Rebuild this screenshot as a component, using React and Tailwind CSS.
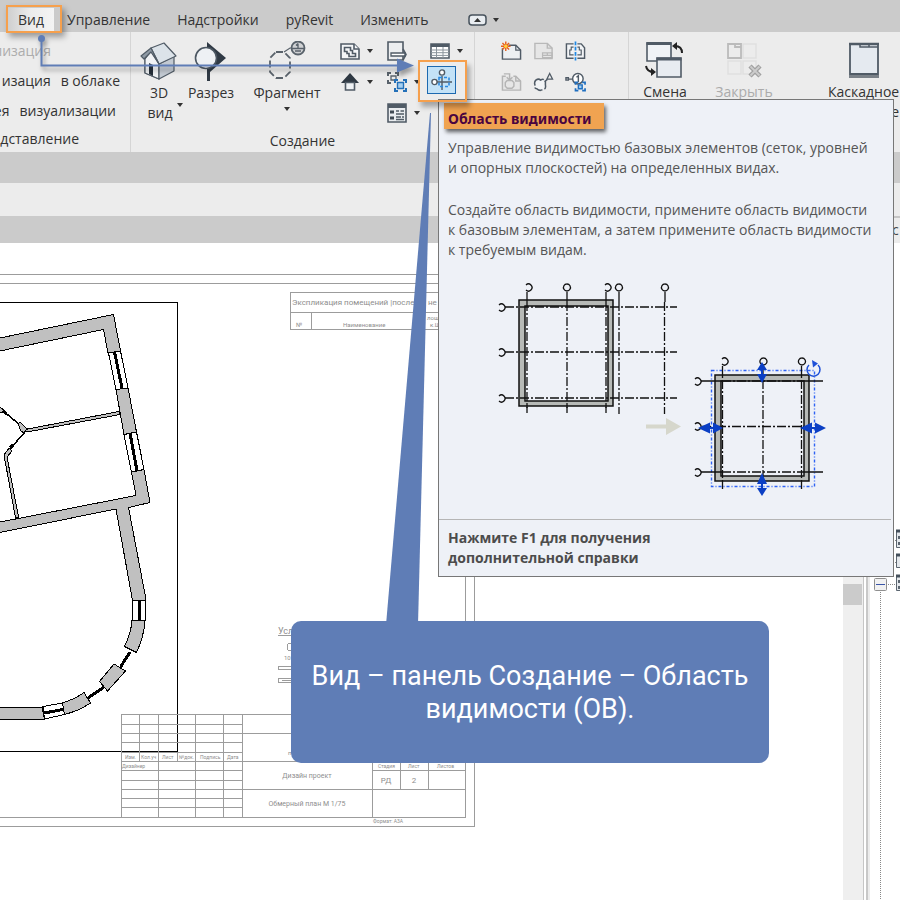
import React from "react";

const ICON = "#505b66";

const tabs = ["Управление", "Надстройки", "pyRevit", "Изменить"];

const Caret = ({ className = "" }) => (
  <svg className={`h-1 w-[6px] shrink-0 ${className}`} viewBox="0 0 6 4">
    <path d="M0 0h6L3 4z" fill="#333" />
  </svg>
);

const HouseIcon = () => (
  <svg width="38" height="38" viewBox="0 0 38 38" stroke={ICON} strokeWidth="1.2" strokeLinejoin="round">
    <path d="M5 17v14l14 6V21z" fill="#f5f7f9" />
    <path d="M5 17l6-8 8 13v15L5 31z" fill="#f1f3f5" />
    <path d="M19 22l15-8v15l-15 8z" fill="#c3cad2" />
    <path d="M11 6L24 1l12 13-17 8z" fill="#dce3e9" />
    <path d="M11 6L1 14l3 3 7-7 8 12z" fill="#8f9aa5" />
    <path d="M9 21l4 2v11l-4-2z" fill="#26303a" stroke="none" />
  </svg>
);

const SectionIcon = () => (
  <svg width="36" height="40" viewBox="0 0 36 40">
    <path d="M14 1l19 16-16 14v9h-3z" fill="#303a45" />
    <circle cx="13" cy="17" r="10.500" fill="#eef1f4" stroke="#4c5762" strokeWidth="1.6" />
  </svg>
);

const CalloutIcon = () => (
  <svg width="38" height="40" viewBox="0 0 38 40" fill="none" stroke="#59626b" strokeWidth="1.8">
    <path d="M8 11h8l6 6v14l-6 6H8l-6-6V17z" strokeDasharray="7 3" />
    <path d="M16 11l6-4h4" strokeWidth="1.2" />
    <circle cx="30" cy="7" r="6.5" fill="#d0d2d4" />
    <path d="M23.500 7.500h13M30 2.500v5M28 4.500l2-2M27 10h6" strokeWidth="1.3" />
  </svg>
);

const PlanIcon = () => (
  <svg width="20" height="18" viewBox="0 0 20 18" fill="#f4f6f8" stroke={ICON} strokeWidth="1.600">
    <path d="M1 2h13l5 5v10H1z" />
    <path d="M14 2v5h5" />
    <path d="M4.500 5.500h6v3h2v3h3v3H9v-3H7v-2H4.500z" />
  </svg>
);

const ElevationIcon = () => (
  <svg width="20" height="18" viewBox="0 0 20 18">
    <path d="M10 0l9 10H1z" fill="#2f3943" />
    <path d="M5.500 9.500h9V17h-9z" fill="#f0f3f6" stroke={ICON} strokeWidth="1.600" />
  </svg>
);

const DraftIcon = () => (
  <svg width="20" height="20" viewBox="0 0 20 20" fill="none" stroke={ICON} strokeWidth="1.600">
    <path d="M1 1h15v18H1z" fill="#eceef0" />
    <path d="M4 12h14v3H4z" fill="#fff" strokeWidth="1.300" />
    <path d="M16 8l3 5.500-3 5.500" />
  </svg>
);

const DuplicateIcon = () => (
  <svg width="20" height="20" viewBox="0 0 20 20" fill="none" strokeWidth="2">
    <path d="M1 4V1h3M8 1h3v3M1 8v3h3" stroke="#59626b" />
    <path d="M4 4h5v4H4z" stroke="#59626b" strokeWidth="1.300" />
    <path d="M8 11V8h3M16 8h3v3M8 16v3h3M16 19h3v-3" stroke="#2470b8" />
    <path d="M10.500 10.500h6v6h-6z" fill="#a8d0f0" stroke="#2470b8" strokeWidth="1.400" />
  </svg>
);

const LegendIcon = () => (
  <svg width="20" height="20" viewBox="0 0 20 20">
    <path d="M1 1h18v18H1z" fill="#e9ecef" stroke={ICON} strokeWidth="1.600" />
    <path d="M1 1h18v4H1z" fill={ICON} />
    <path d="M3 7.500h4v3H3zM3 13.500h4v3H3z" fill="#3f4953" />
    <path d="M9 8h3M13.500 8H17M9 11h8M9 14h5M15 14h2M9 16.500h8" stroke={ICON} strokeWidth="1.300" />
  </svg>
);

const ScheduleIcon = () => (
  <svg width="20" height="16" viewBox="0 0 20 16">
    <path d="M1 1h18v14H1z" fill="#fff" stroke={ICON} strokeWidth="1.600" />
    <path d="M1 1h18v3H1z" fill={ICON} />
    <path d="M1 7h18M1 9.700h18M1 12.400h18M6.500 4v11M13 4v11" stroke="#8b949c" strokeWidth="1" />
  </svg>
);

const ScopeBoxIcon = () => (
  <svg width="22" height="22" viewBox="0 0 22 22" fill="none" stroke={ICON} strokeWidth="1.400">
    <path d="M11 7v14M6 13h15" />
    <circle cx="11" cy="3.500" r="2.600" fill="#fff" />
    <circle cx="3.500" cy="13" r="2.600" fill="#fff" />
    <path d="M8 8.500h10v9H8z" stroke="#2b8ae0" strokeDasharray="3 2" strokeWidth="1.600" />
  </svg>
);

const SheetIcon = () => (
  <svg width="22" height="20" viewBox="0 0 22 20">
    <path d="M1.500 7v11.500h19V9l-5-5H8" fill="#eceff2" stroke={ICON} strokeWidth="1.500" />
    <path d="M15.500 4v5h5" fill="none" stroke={ICON} strokeWidth="1.300" />
    <path d="M5 0v10M0 5h10M1.500 1.500l7 7M8.500 1.500l-7 7" stroke="#e8601c" strokeWidth="1.500" />
    <circle cx="5" cy="5" r="1.800" fill="#ffd23c" />
  </svg>
);

const TitleBlockIcon = () => (
  <svg width="22" height="20" viewBox="0 0 22 20" fill="none" stroke="#b9b9b9" strokeWidth="1.500">
    <path d="M2 2h13l5 5v11H2z" fill="#e6e6e6" />
    <path d="M15 2v5h5" />
    <path d="M10 12h10v5H10zM10 14.500h10M15 12v2.500" strokeWidth="1.300" />
  </svg>
);

const MatchlineIcon = () => (
  <svg width="22" height="20" viewBox="0 0 22 20" fill="none" stroke={ICON} strokeWidth="1.500">
    <path d="M9 2.500H1.500v15H9M13 2.500h4l3.500 4v11H13" fill="#f2f4f6" />
    <path d="M9 6H6.500v3H5v5h4M13 6h2v3h2v5h-4" strokeWidth="1.200" />
    <path d="M11 0v20" stroke="#1e88e5" strokeWidth="1.800" strokeDasharray="4 1.500" />
  </svg>
);

const PlaceViewIcon = () => (
  <svg width="22" height="20" viewBox="0 0 22 20" fill="none" stroke="#b5b5b5" strokeWidth="1.500">
    <path d="M5 4H1.500v14.500h19V9l-5-5H13" fill="#e6e6e6" />
    <path d="M15.500 4v5h5M3 1.500h6V7M6 5l3 3 3-3" />
    <path d="M6.500 8.500h5l2 2v4l-2 2h-5l-2-2v-4z" />
  </svg>
);

const RevisionIcon = () => (
  <svg width="22" height="20" viewBox="0 0 22 20" fill="none" stroke={ICON} strokeWidth="1.600">
    <path d="M3 8q3-2 5 0 3-2 5 1v4q1 5-3 5-3 2-6-1-3 0-2-4-1-3 1-5z" fill="#f2f4f6" strokeDasharray="9 2" />
    <path d="M17.500 1l3 6h-6zM15 7.500l-3 2" strokeWidth="1.300" />
  </svg>
);

const GuideGridIcon = () => (
  <svg width="22" height="20" viewBox="0 0 22 20" fill="none" stroke={ICON} strokeWidth="1.500">
    <path d="M1 5.500h2.500v2.500H1zM3 7h5" />
    <circle cx="13.500" cy="6.500" r="5.500" fill="#fff" />
    <path d="M12 5l2-1.500V10" />
    <path d="M11 13v-2.500h3M18 10.500h3V13M11 16.500V19h3M18 19h3v-2.500" stroke="#1f6fc0" strokeWidth="1.800" />
    <path d="M14 13h4v4h-4z" fill="#9fd0f5" stroke="#1f6fc0" />
  </svg>
);

const SwitchWindowIcon = () => (
  <svg width="40" height="38" viewBox="0 0 40 38" fill="none" stroke={ICON} strokeWidth="1.600">
    <path d="M2 2h24v18H2z" fill="#f0f3f6" />
    <path d="M1.500 2.500h25" strokeWidth="3" />
    <path d="M12 17h24v19H12z" fill="#e8ecf1" stroke={ICON} />
    <path d="M11.500 18h25" strokeWidth="3" />
    <path d="M37 12q0-7-7-7M1 25q1 6 8 6" stroke="#222" strokeWidth="2" />
    <path d="M32 1l-5 4 5 4zM6 27l5 4-5 4z" fill="#222" stroke="none" />
  </svg>
);

const CloseWindowIcon = () => (
  <svg width="36" height="38" viewBox="0 0 36 38" fill="none" stroke="#e0e0e0" strokeWidth="1.500">
    <path d="M17 3h13v14H17zM2 20h13v13H2zM17 20h13v13H17z" />
    <path d="M2 3h13v14H2zM9 3v3h6" stroke="#bbb" strokeWidth="1.800" />
    <path d="M24 25l10 10M34 25L24 35" stroke="#a0a0a0" strokeWidth="4.500" />
    <path d="M24.500 25.500l9 9M33.500 25.500l-9 9" stroke="#ccc" strokeWidth="1.800" />
  </svg>
);

const CascadeIcon = () => (
  <svg width="32" height="38" viewBox="0 0 32 38">
    <path d="M1 34h30v3H1z" fill="#7a8188" />
    <path d="M2 3h28v30H2z" fill="#e5eaf0" stroke={ICON} strokeWidth="1.800" />
    <path d="M1 3h30" stroke={ICON} strokeWidth="2.500" />
    <path d="M12 3v3h18M21 3v3" stroke={ICON} strokeWidth="1.500" fill="none" />
  </svg>
);

const BigButton = ({ icon, label, className = "", disabled = false, children }) => (
  <button
    type="button"
    disabled={disabled}
    className={`flex shrink-0 flex-col items-center whitespace-nowrap leading-5 ${className}`}
  >
    <span className="flex h-11 items-center">{icon}</span>
    <span>{label}</span>
    {children}
  </button>
);

const SmallButton = ({ icon, label, caret = false }) => (
  <button type="button" aria-label={label} className="flex h-[31px] items-center gap-[7px]">
    <span className="flex w-[21px] justify-center">{icon}</span>
    {caret && <Caret />}
  </button>
);

const TabBar = () => (
  <nav className="flex h-8 items-end bg-[#cbcbcb] text-[#333]">
    <button
      type="button"
      className="ml-2 h-6 w-[46px] shrink-0 bg-gradient-to-r from-[#cfcfcf] via-[#ececec] to-[#f4f4f4] text-center leading-6"
    >
      Вид
    </button>
    <div className="ml-[13px] flex items-center gap-[27px] pb-[2px]">
      {tabs.map((tab) => (
        <button key={tab} type="button" className="leading-5">
          {tab}
        </button>
      ))}
    </div>
    <button type="button" aria-label="Свернуть ленту" className="mb-[6px] ml-10 flex items-center gap-[6px]">
      <svg width="19" height="12" viewBox="0 0 19 12">
        <rect x="1" y="1" width="17" height="10" rx="3" fill="#e9edf1" stroke="#47525c" strokeWidth="1.500" />
        <path d="M9.500 4l3.500 4H6z" fill="#333" />
      </svg>
      <Caret />
    </button>
  </nav>
);

const Ribbon = () => (
  <div className="flex h-[120px] overflow-hidden bg-[#ececec] text-[#333]">
    <section className="flex w-[131px] shrink-0 flex-col items-start overflow-hidden whitespace-nowrap border-r border-[#d5d5d5] pt-[3px]">
      <button type="button" disabled className="flex h-[31px] w-[51px] items-center justify-end text-[#adadad]">
        лизация
      </button>
      <button type="button" className="flex h-[31px] w-[120px] items-center justify-end gap-[10px]">
        <span>изация</span>
        <span>в облаке</span>
      </button>
      <button type="button" className="flex h-[31px] w-[116px] items-center justify-end gap-[10px]">
        <span>ея</span>
        <span>визуализации</span>
      </button>
      <h2 className="flex w-[79px] justify-end leading-[26px]">дставление</h2>
    </section>

    <section className="flex w-[344px] shrink-0 flex-col border-r border-[#d5d5d5]">
      <div className="flex h-24 items-start pt-[3px]">
        <BigButton icon={<HouseIcon />} label="3D" className="ml-2 w-10 pt-1">
          <span className="flex items-center gap-1">
            вид <Caret className="-mr-3 mb-4" />
          </span>
        </BigButton>
        <BigButton icon={<SectionIcon />} label="Разрез" className="ml-2 w-12 pt-1" />
        <BigButton icon={<CalloutIcon />} label="Фрагмент" className="ml-4 w-[72px] pt-1">
          <Caret className="mt-1" />
        </BigButton>
        <div className="ml-4 flex flex-col">
          <SmallButton icon={<PlanIcon />} label="Виды в плане" caret />
          <SmallButton icon={<ElevationIcon />} label="Фасад" caret />
        </div>
        <div className="ml-[13px] flex flex-col">
          <SmallButton icon={<DraftIcon />} label="Чертежный вид" />
          <SmallButton icon={<DuplicateIcon />} label="Копировать вид" caret />
          <SmallButton icon={<LegendIcon />} label="Легенды" caret />
        </div>
        <div className="ml-[9px] flex flex-col">
          <SmallButton icon={<ScheduleIcon />} label="Спецификации" caret />
          <button
            type="button"
            aria-label="Область видимости"
            className="-ml-[2px] flex h-7 w-[29px] items-center justify-center border border-[#1c69b0] bg-[#c3e2f7]"
          >
            <ScopeBoxIcon />
          </button>
        </div>
      </div>
      <h2 className="text-center leading-[26px]">Создание</h2>
    </section>

    <section className="w-[154px] shrink-0 border-r border-[#d5d5d5] pl-[26px] pt-[3px]">
      <div className="grid w-[86px] grid-cols-3 gap-x-[10px]">
        <SmallButton icon={<SheetIcon />} label="Лист" />
        <SmallButton icon={<TitleBlockIcon />} label="Основная надпись" />
        <SmallButton icon={<MatchlineIcon />} label="Линия совмещения" />
        <SmallButton icon={<PlaceViewIcon />} label="Разместить вид" />
        <SmallButton icon={<RevisionIcon />} label="Изменения" />
        <SmallButton icon={<GuideGridIcon />} label="Направляющая сетка" />
      </div>
    </section>

    <section className="flex min-w-0 flex-1 items-start pl-2 pt-[6px]">
      <BigButton icon={<SwitchWindowIcon />} label="Смена" className="w-14" />
      <BigButton icon={<CloseWindowIcon />} label="Закрыть" className="ml-[21px] w-15 text-[#ababab]" disabled />
      <BigButton icon={<CascadeIcon />} label="Каскадное" className="ml-[54px]">
        <span className="self-end">е</span>
      </BigButton>
    </section>
  </div>
);

const Walls = () => (
  <g fill="#c0c0c0" stroke="#000" strokeWidth="1" shapeRendering="crispEdges">
    <path d="M-5 339L113.500 314.500 120.500 351 108 353 103.500 329.500-5 352z" />
    <path d="M116 389.500l12-1.500 8.500 44-12.500 2.500z" />
    <path d="M131.500 472l12.500-2.500 6 33-21.500 5L145.500 597v3.500h-13L116 509-5 533.500v-10.500L136 495.500z" />
    <path d="M132 620h13q-1 17-8.500 32.500l-12-6Q131 634 132 620z" />
    <path d="M114 664l11.500 7-18 20-8-9.500z" />
    <path d="M84 692.500l6.500 10.500q-12 8-26 11.500L62.500 703Q75 699 84 692.500z" />
    <path d="M-5 707.500h47l2.500 12H-5z" />
    <path d="M25 429.500l94-18 1 3-93 17.500z" />
    <path d="M4 455l5-7 3 3-5 6 11.500 60-3 1z" />
    <path d="M18 424l2-2 7 7-3 4-3-2z" />
    <path d="M-3 405l7 5-2 3-5-3z" />
    <g fill="#fff">
      <path d="M108.500 353l12-2 7.500 37-12 1.500z" />
      <path d="M124 434.500l12.500-2.500 7.500 37.500-12.500 2.500z" />
      <path d="M132.500 600.500h13v19.500h-13z" />
      <path d="M62.500 703l2 11.500-20 4.500-1.500-12.500z" />
    </g>
    <g fill="none">
      <path d="M3 411l16 13M24 433L10 449" strokeWidth="1.500" />
      <path d="M3 411l4 3M13 445l-3 3" strokeWidth="3" />
      <path d="M114.500 352l7.500 36M130 433l7 38M139 601v19M130 652l-9.500 15M104 687l-16 11M44 713l19-3.500" strokeWidth="3" />
    </g>
  </g>
);

const TitleBlock = () => (
  <g>
    <g fill="none" stroke="#9c9c9c" shapeRendering="crispEdges">
      <path d="M0 274.500h474.500v552H0M0 283.500h465.500V817.500H0" />
      <path d="M290.500 329.500v-37H465M290.500 312.500H465M290.500 329.500H465M311.500 312.500v17" />
      <path d="M121.500 817V714.500H465M121.500 724.500h121M121.500 733.500h121M121.500 742.500h121M121.500 752.500h121M121.500 761.500H465M121.500 770.500h121M121.500 780.500h121M121.500 789.500H465M121.500 798.500h121M121.500 807.500h121M242.500 733.500H465M372.500 770.500H465" />
      <path d="M139.500 714.500v47M158.500 714.500v103M177.500 752.500v9M195.500 714.500v103M223.500 714.500v103M242.500 714.500v103M372.500 761.500v56M400.500 761.500v28M428.500 761.500v28" />
      <path d="M278 635.500h14M278.500 666.500h14v3h-14zM278.500 678.500h14v4h-14zM282 680.500h10" />
      <circle cx="291" cy="647" r="4" />
    </g>
    <g fill="#8e8e8e">
      <text x="292" y="305" fontSize="8">Экспликация помещений |после</text>
      <text x="428" y="305" fontSize="8">не</text>
      <text x="278" y="634" fontSize="9">Усл</text>
      <text x="307" y="778" fontSize="7" textAnchor="middle">Дизайн проект</text>
      <text x="307" y="806" fontSize="7" textAnchor="middle">Обмерный план М 1/75</text>
      <text x="386" y="783" fontSize="8" textAnchor="middle">РД</text>
      <text x="414" y="783" fontSize="8" textAnchor="middle">2</text>
    </g>
    <g fill="#8e8e8e" fontSize="6">
      <text x="296" y="327">№</text>
      <text x="343" y="327">Наименование</text>
      <text x="427" y="320">лощ</text>
      <text x="430" y="327">к.Ш</text>
      <text x="284" y="660">10</text>
      <text x="288" y="755">п</text>
    </g>
    <g fill="#8e8e8e" fontSize="5">
      <text x="125" y="759">Изм.</text>
      <text x="141" y="759">Кол.уч</text>
      <text x="162" y="759">Лист</text>
      <text x="179" y="759">№док.</text>
      <text x="200" y="759">Подпись</text>
      <text x="227" y="759">Дата</text>
      <text x="122" y="768">Дизайнер</text>
      <text x="378" y="768">Стадия</text>
      <text x="408" y="768">Лист</text>
      <text x="437" y="768">Листов</text>
      <text x="373" y="823">Формат: А3А</text>
    </g>
  </g>
);

const FloorPlan = () => (
  <svg
    className="block shrink-0 font-[Roboto,sans-serif]"
    width="843"
    height="657"
    viewBox="0 243 843 657"
    role="img"
    aria-label="План этажа"
  >
    <path d="M0 302.500h177.500v449H0" fill="none" stroke="#000" shapeRendering="crispEdges" />
    <Walls />
    <TitleBlock />
  </svg>
);

const ProjectTree = () => (
  <aside className="flex min-w-0 flex-1 flex-col bg-white">
    <div className="h-[27px] border-t-2 border-[#c6c6c6] bg-[#ececec] pl-[22px] leading-6 text-[#444]">с</div>
    <svg className="block shrink-0" width="30" height="657" viewBox="870 243 30 657" fill="none">
      <path d="M880.500 592v308M888 584.500h8M893 540.500h4M893 562.500h4" stroke="#888" strokeDasharray="1 1" />
      <rect x="874.500" y="578.500" width="12" height="12" rx="1" fill="#f1f1f1" stroke="#8f8f8f" />
      <path d="M876 584.500h9" stroke="#3a55a8" />
      <path d="M896.500 530.500h8v17h-8zM896.500 554.500h8v13h-8zM896.500 575.500h8v15h-8z" fill="#e4e8ec" stroke="#5c6670" />
      <path d="M896 531h8M896 555h8M896 576h8" stroke="#44505c" strokeWidth="3" />
      <path d="M898 536h2v3h-2zM898 542h2v3h-2zM898 580h2v3h-2zM898 586h2v3h-2z" fill="#5c6670" />
    </svg>
  </aside>
);

const ScopeBoxFigure = () => (
  <svg className="block" width="454" height="252" viewBox="439 267 454 252" fill="none" role="img" aria-label="Пример области видимости">
    <path d="M519 300h94v106h-94zM525 306v95h83v-95z" fill="#b7bab7" fillRule="evenodd" stroke="#111" strokeWidth="1.500" />
    <g stroke="#111" strokeWidth="1.300">
      <path d="M527 292v10M567 292v10M606 292v10M619 292v10M665 292v10M527 405v8M567 405v8M606 405v8" />
      <path d="M505 307h172M505 352h172M505 398h172M527 302v106M567 302v106M606 302v106M619 302v112M664.500 302v112" strokeDasharray="9 2 2 2" />
      <path d="M526 285a3.500 3.500 0 1 1 0 5M567 284a3.500 3.500 0 1 1-.1 0M605 285a3.500 3.500 0 1 1 0 5M619 284a3.500 3.500 0 1 1-.1 0M665 284a3.500 3.500 0 1 1-.1 0" />
      <path d="M499 305a3.500 3.500 0 1 1 0 5M499 350a3.500 3.500 0 1 1 0 5M499 396a3.500 3.500 0 1 1 0 5" />
    </g>
    <path d="M646 424.500h20V418l15 8.500-15 8.500v-6.500h-20z" fill="#d6d7cc" />

    <path d="M715 375h94v106h-94zM721 381v95h83v-95z" fill="#b7bab7" fillRule="evenodd" stroke="#111" strokeWidth="1.500" />
    <path d="M711.500 370.500h103v116h-103z" stroke="#2d62f5" strokeWidth="1.400" strokeDasharray="3 2 1 2" />
    <g stroke="#111" strokeWidth="1.300">
      <path d="M722.500 366v12M763 366v12M801.500 366v12M722.500 480v9M801.500 480v9M701 381h21M701 472h21M804 381h19M804 472h19" />
      <path d="M722 381h82M702 426.500h102M722 472h82M722.500 380v98M763 380v98M801.500 380v98" strokeDasharray="9 2 2 2" />
      <path d="M722 359a3.500 3.500 0 1 1 0 5M763.500 358a3.500 3.500 0 1 1-.1 0M802 358a3.500 3.500 0 1 1-.1 0" />
      <path d="M695 379a3.500 3.500 0 1 1 0 5M695 424a3.500 3.500 0 1 1 0 5M695 470a3.500 3.500 0 1 1 0 5" />
    </g>
    <g fill="#0b3fc4">
      <path d="M762 362l5 8h-10zM757 374h10l-5 9zM762 473l5 11h-10zM757 488h10l-5 8z" />
      <path d="M698 428l12-5.500v11zM713 422.500l10 5.500-10 5.500zM800 428l12-5.500v11zM815 422.500l11 5.500-11 5.500z" />
      <path d="M761 368h2v9h-2zM761 481h2v9h-2zM707 427h9v2h-9zM809 427h9v2h-9z" />
    </g>
    <path d="M809 365a6.500 6.500 0 1 0 9 0" stroke="#1e50d8" strokeWidth="1.500" />
    <path d="M812 360l6 3.500-5 4z" fill="#1e50d8" />
  </svg>
);

const Tooltip = () => (
  <div
    role="tooltip"
    className="absolute left-[438px] top-[99px] w-[456px] border border-[#777] bg-[#eef1f7] text-[#555]"
  >
    <h3 className="ml-[5px] mt-[3px] h-[26px] w-[160px] whitespace-nowrap bg-[#f0a351] pl-1 pt-1 font-['Noto_Sans',sans-serif] font-bold leading-6 text-[#4a0440] shadow-[2px_3px_4px_rgba(0,0,0,0.6)]">
      Область видимости
    </h3>
    <div className="whitespace-nowrap pl-[9px] pt-[9px] leading-5">
      <p>
        Управление видимостью базовых элементов (сеток, уровней
        <br />и опорных плоскостей) на определенных видах.
      </p>
      <p className="mt-[22px]">
        Создайте область видимости, примените область видимости
        <br />к базовым элементам, а затем примените область видимости
        <br />к требуемым видам.
      </p>
    </div>
    <div className="mt-[7px]">
      <ScopeBoxFigure />
    </div>
    <p className="mr-[2px] border-t border-[#b5b5b5] pb-2 pl-[9px] pt-2 font-bold leading-5 text-[#4c4c4c]">
      Нажмите F1 для получения
      <br />
      дополнительной справки
    </p>
  </div>
);

// orange frames, blue arrow and the caption drawn over the window
const Annotations = () => (
  <>
    <div className="pointer-events-none absolute left-[6px] top-[5px] h-7 w-14 border-2 border-[#f6a04d] shadow-[3px_4px_6px_rgba(0,0,0,0.35)]" />
    <svg className="pointer-events-none absolute left-0 top-0 drop-shadow-[2px_4px_2px_rgba(0,0,0,0.35)]" width="430" height="90" viewBox="0 0 430 90">
      <path d="M41.500 38v27.500H400" fill="none" stroke="#5f7db6" strokeWidth="2" />
      <circle cx="41.500" cy="38.500" r="3.500" fill="#5f7db6" />
      <path d="M397 58.500l17 7-17 7z" fill="#5f7db6" />
    </svg>
    <div className="pointer-events-none absolute left-[418px] top-[60px] h-[42px] w-[49px] border-2 border-[#f6a04d] shadow-[3px_5px_5px_rgba(0,0,0,0.3)]" />
    <svg className="pointer-events-none absolute left-[380px] top-[110px]" width="60" height="520" viewBox="380 110 60 520">
      <path d="M430 113h1L418 625h-32z" fill="#5f7db6" />
    </svg>
    <p className="absolute left-[291px] top-[621px] flex h-[142px] w-[478px] items-center justify-center rounded-[10px] bg-[#5f7db6] pt-[2px] text-center font-[Roboto,sans-serif] text-[27px] leading-[33px] text-white">
      Вид – панель Создание – Область
      <br />
      видимости (ОВ).
    </p>
  </>
);

const App = () => {
  return (
    <main className="relative flex h-screen w-full flex-col overflow-hidden bg-[#cbcbcb] font-['Open_Sans','Noto_Sans',sans-serif] text-[14px]">
      <TabBar />
      <Ribbon />
      <div className="mt-[31px] h-[33px] shrink-0 bg-[#ececec]" />
      <div className="flex min-h-0 flex-1">
        <div className="flex min-w-0 flex-1 flex-col">
          <div className="h-[27px] shrink-0" />
          <div className="flex min-h-0 flex-1 bg-white">
            <div className="min-w-0 flex-1 overflow-hidden">
              <FloorPlan />
            </div>
            <div className="w-5 shrink-0 bg-[#efefef] pt-[341px]">
              <div className="h-[21px] w-[19px] bg-[#cbcbcb]" />
            </div>
          </div>
        </div>
        <div className="w-[7px] shrink-0 border-l border-r-2 border-l-[#c6c6c6] border-r-[#ececec] bg-white">
          <div className="ml-[2px] h-full w-[2px] bg-[#c8c8c8]" />
        </div>
        <div className="flex w-[30px] shrink-0 overflow-hidden">
          <ProjectTree />
        </div>
      </div>
      <Tooltip />
      <Annotations />
    </main>
  );
};

export default App;
